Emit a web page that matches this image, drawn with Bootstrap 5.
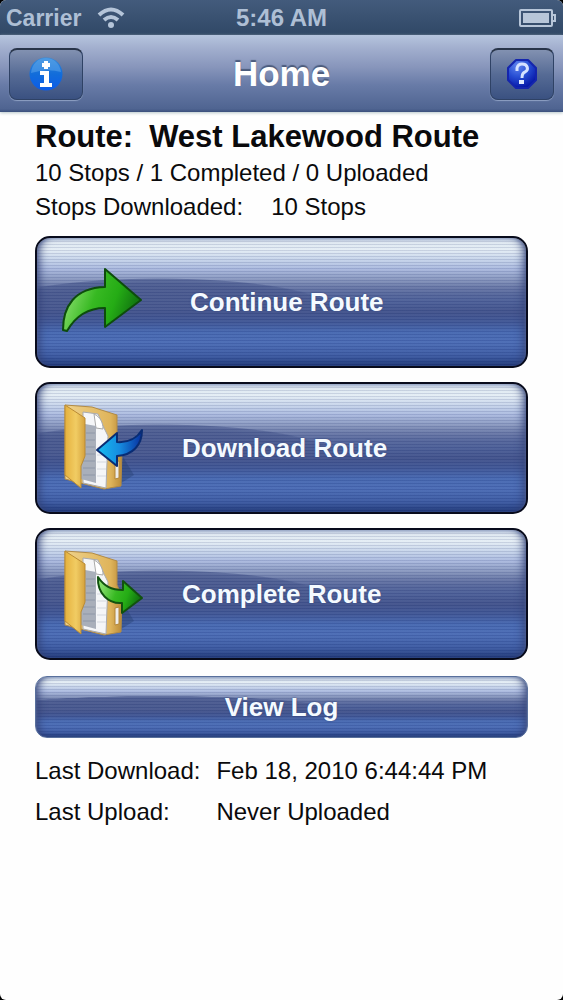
<!DOCTYPE html>
<html lang="en">
<head>
<meta charset="utf-8">
<meta name="viewport" content="width=device-width, initial-scale=1">
<title>Home</title>
<link href="https://cdn.jsdelivr.net/npm/bootstrap@5.3.0/dist/css/bootstrap.min.css" rel="stylesheet">
<style>
body { background: #000; font-family: "Liberation Sans", Arial, sans-serif; font-size: 24px; line-height: 34px; color: #0a0a0c; }
.phone { background: #fefefe; border-radius: 6px; overflow: hidden; }
.status-bar { height: 35px; padding: 0 6px; background: linear-gradient(#435b7c, #304866); color: #aebfd5; font-weight: 700; }
.side { flex: 1 1 0; }
.carrier { font-size: 23px; }
.title-bar { height: 77px; padding: 0 9px; background: linear-gradient(#b6c5de 0, #a3b0cf 16%, #8795bb 42%, #687ba7 65%, #4f6491 96%, #3b4f7c 100%); box-shadow: 0 1px 3px #b5c5c9; }
.title-bar h1 { font-size: 35px; line-height: 40px; color: #fff; text-shadow: 0 -2px 1px #4b5b7c; }
.bar-btn { height: 52px; border: 1px solid #2f4265; border-top: 2px solid #283449; border-radius: 8px; background: linear-gradient(#8291b1, #566b95 50%, #3a5181); box-shadow: 0 1px 1px #8fa1c4; }
.bar-info { width: 74px; }
.bar-help { width: 64px; }
.content-area { padding: 6px 35px 0; }
.route-title { font-size: 31px; line-height: 38px; font-weight: 700; }
.downloaded { gap: 28px; }
.menu-list { row-gap: 14px; }
.menu-btn {
  overflow: hidden; width: 100%; height: 132px; padding: 0 24px; border: 2px solid #080b1c; border-radius: 15px;
  color: #f4faff; font-size: 26px; font-weight: 700; text-align: left; text-shadow: 0 0 2px #35477c;
  background:
    repeating-linear-gradient(rgba(20,35,95,.13) 0 1px, rgba(255,255,255,.03) 1px 3px),
    radial-gradient(ellipse 36% 44% at 25% 100%, rgba(72,88,142,.85) 0 80%, rgba(72,88,142,.65) 97%, rgba(72,88,142,0) 100%) 0 0 / 100% 56% no-repeat,
    linear-gradient(#dce6ef 0, #e4edf5 9%, #c6d4ea 17%, #abbadf 24%, #8a99c0 32%, #6b7aa8 38%, #56679c 44%, #4c5f98 50%, #42538c 58%, #405797 66%, #4769b2 74%, #4a6bb5 82%, #3c5aa2 92%, #203979 100%);
  box-shadow: inset 9px 0 10px -7px #303f75, inset -9px 0 10px -7px #303f75, inset 0 2px 3px #a9b8d3;
}
.btn-label { margin-left: 33px; }
.menu-btn svg { flex: none; }
.log-btn { height: 62px; border: 1px solid #59709c; border-radius: 12px; }
.info-grid { display: grid; grid-template-columns: max-content 1fr; column-gap: 16px; row-gap: 7px; }
</style>
</head>
<body>
<div class="phone min-vh-100">
  <header>
    <div class="status-bar d-flex align-items-center">
      <div class="side d-flex align-items-center gap-3">
        <span class="carrier">Carrier</span>
        <svg width="28" height="22" viewBox="0 0 28 22" fill="none" stroke="#b5c5d9" stroke-width="4" aria-hidden="true">
          <path d="M2 8Q14-3 26 8M7 13Q14 7 21 13"/><circle cx="14" cy="18" r="3" fill="#b5c5d9" stroke="none"/>
        </svg>
      </div>
      <span>5:46 AM</span>
      <div class="side d-flex justify-content-end">
        <svg width="38" height="20" viewBox="0 0 38 20" fill="none" stroke="#b7c6d9" stroke-width="2" aria-hidden="true">
          <rect x="1" y="2" width="32" height="16" rx="1"/><rect x="4" y="5" width="26" height="10" fill="#b7c6d9" stroke="none"/><path d="M33 7h3v6h-3"/>
        </svg>
      </div>
    </div>
    <nav class="title-bar d-flex align-items-center">
      <div class="side d-flex">
        <button type="button" class="bar-btn bar-info p-0 d-flex align-items-center justify-content-center" aria-label="Information">
          <svg width="34" height="36" viewBox="0 0 34 36">
            <defs><linearGradient id="infoBlue" x2="0" y2="1"><stop stop-color="#3589da"/><stop offset=".5" stop-color="#126dda"/><stop offset="1" stop-color="#0b5be8"/></linearGradient></defs>
            <circle cx="17" cy="18" r="16.500" fill="url(#infoBlue)"/><path d="M2 17C3 8 9 2 17 2s14 6 15 14Q18 12 2 17z" fill="#74b7ef" opacity=".4"/>
            <path d="M15 5h4v2h2v4h-2v2h-4v-2h-2V7h2zM11 15h9v12h3v4H11v-4h4v-8h-4z" fill="#fff"/>
          </svg>
        </button>
      </div>
      <h1 class="m-0 fw-bold">Home</h1>
      <div class="side d-flex justify-content-end">
        <button type="button" class="bar-btn bar-help p-0 d-flex align-items-center justify-content-center" aria-label="Help">
          <svg width="30" height="30" viewBox="0 0 30 30">
            <defs><radialGradient id="helpBlue" cx=".35" cy=".2" r=".8"><stop stop-color="#6286ee"/><stop offset=".5" stop-color="#284fd4"/><stop offset="1" stop-color="#0719a9"/></radialGradient></defs>
            <path d="M9 1h12l8 8v12l-8 8H9l-8-8V9z" stroke="#1425ad" stroke-linejoin="round" stroke-width="2" fill="url(#helpBlue)"/>
            <path d="M10 12V9q1-4 5-4c6 0 7 6 3 8q-3 1-3 6" fill="none" stroke="#d5e2ff" stroke-width="3"/><path d="M12 21h5v4h-5z" fill="#e1eaff"/>
          </svg>
        </button>
      </div>
    </nav>
  </header>

  <main class="content-area">
    <h2 class="route-title d-flex gap-3 m-0"><span>Route:</span><span>West Lakewood Route</span></h2>
    <p class="m-0">10 Stops / 1 Completed / 0 Uploaded</p>
    <p class="downloaded d-flex m-0"><span>Stops Downloaded:</span><span>10 Stops</span></p>

    <div class="menu-list d-grid mt-2 pt-1">
      <button type="button" class="menu-btn d-flex align-items-center">
        <svg width="96" height="80" viewBox="0 0 96 80" aria-hidden="true">
          <defs>
            <linearGradient id="green" y2=".3"><stop stop-color="#8be66c"/><stop offset=".2" stop-color="#7bd860"/><stop offset=".5" stop-color="#37b922"/><stop offset=".75" stop-color="#25ac15"/><stop offset="1" stop-color="#137a10"/></linearGradient>
          </defs>
          <path d="M2 68C2 45 13 26 44 25V7l36 31-36 27V46C27 46 14 55 6 69z" fill="url(#green)" stroke="#0d4d0c" stroke-width="2" stroke-linejoin="round"/>
        </svg>
        <span class="btn-label">Continue Route</span>
      </button>

      <button type="button" class="menu-btn d-flex align-items-center">
        <svg width="88" height="90" viewBox="0 0 88 90" aria-hidden="true">
          <defs>
            <linearGradient id="foldFront"><stop stop-color="#e5b13e"/><stop offset=".55" stop-color="#f1cc63"/><stop offset="1" stop-color="#d5a23d"/></linearGradient>
            <linearGradient id="foldBack"><stop stop-color="#efd28a"/><stop offset=".8" stop-color="#dfb45b"/><stop offset="1" stop-color="#b98a38"/></linearGradient>
            <linearGradient id="blueArrow"><stop stop-color="#17bdf0"/><stop offset=".5" stop-color="#168ce0"/><stop offset="1" stop-color="#082f9e"/></linearGradient>
            <g id="folder">
              <path d="M57 82l16-10-11-18z" fill="#203867" opacity=".35"/>
              <path d="M4 2l27 2 25 8v24l5 11-1 36-17 3-39-10z" fill="url(#foldBack)" stroke="#b28b45" stroke-width="1"/>
              <path d="M22 9l15 2 6 14 4 8-2 52-23-5z" fill="#f5f6f8" stroke="#a8aaaf" stroke-width="1"/>
              <path d="M33 11l2 14 7 1c0-7-3-12-9-15z" fill="#fff" stroke="#aaa" stroke-width="1"/>
              <path d="M24 21l11 2v57l-15-4V54z" fill="#a9afba"/>
              <path d="M25 30h9M25 37h9M25 44h9M24 51h10M22 58h12M22 65h12M22 72h12" stroke="#8e97a7"/>
              <path d="M36 45h9M36 52h9M36 59h9M36 66h9M36 73h9" stroke="#d4d8df"/>
              <path d="M4 2l20 13v38l-4 10v22L4 72z" fill="url(#foldFront)" stroke="#ba8b34" stroke-width="1"/>
              <path d="M54 59l4-1v17l-4 1z" fill="#eeedeb" stroke="#b28538"/>
            </g>
          </defs>
          <use href="#folder"/>
          <path d="M36 47l20-17v9c11 1 20-4 25-12 0 15-9 25-25 26v10z" fill="url(#blueArrow)" stroke="#092c74" stroke-width="2" stroke-linejoin="round"/>
        </svg>
        <span class="btn-label">Download Route</span>
      </button>

      <button type="button" class="menu-btn d-flex align-items-center">
        <svg width="88" height="90" viewBox="0 0 88 90" aria-hidden="true">
          <use href="#folder"/>
          <path d="M37 28c6 9 13 13 25 13v-9l19 17-20 15V54C48 55 36 45 37 28z" fill="url(#green)" stroke="#12520f" stroke-width="2" stroke-linejoin="round"/>
        </svg>
        <span class="btn-label">Complete Route</span>
      </button>
    </div>

    <button type="button" class="menu-btn log-btn mt-3 text-center">View Log</button>

    <dl class="info-grid mt-3 mb-0">
      <dt class="fw-normal">Last Download:</dt><dd class="m-0">Feb 18, 2010 6:44:44 PM</dd>
      <dt class="fw-normal">Last Upload:</dt><dd class="m-0">Never Uploaded</dd>
    </dl>
  </main>
</div>
<script src="https://cdn.jsdelivr.net/npm/bootstrap@5.3.0/dist/js/bootstrap.bundle.min.js"></script>
</body>
</html>
